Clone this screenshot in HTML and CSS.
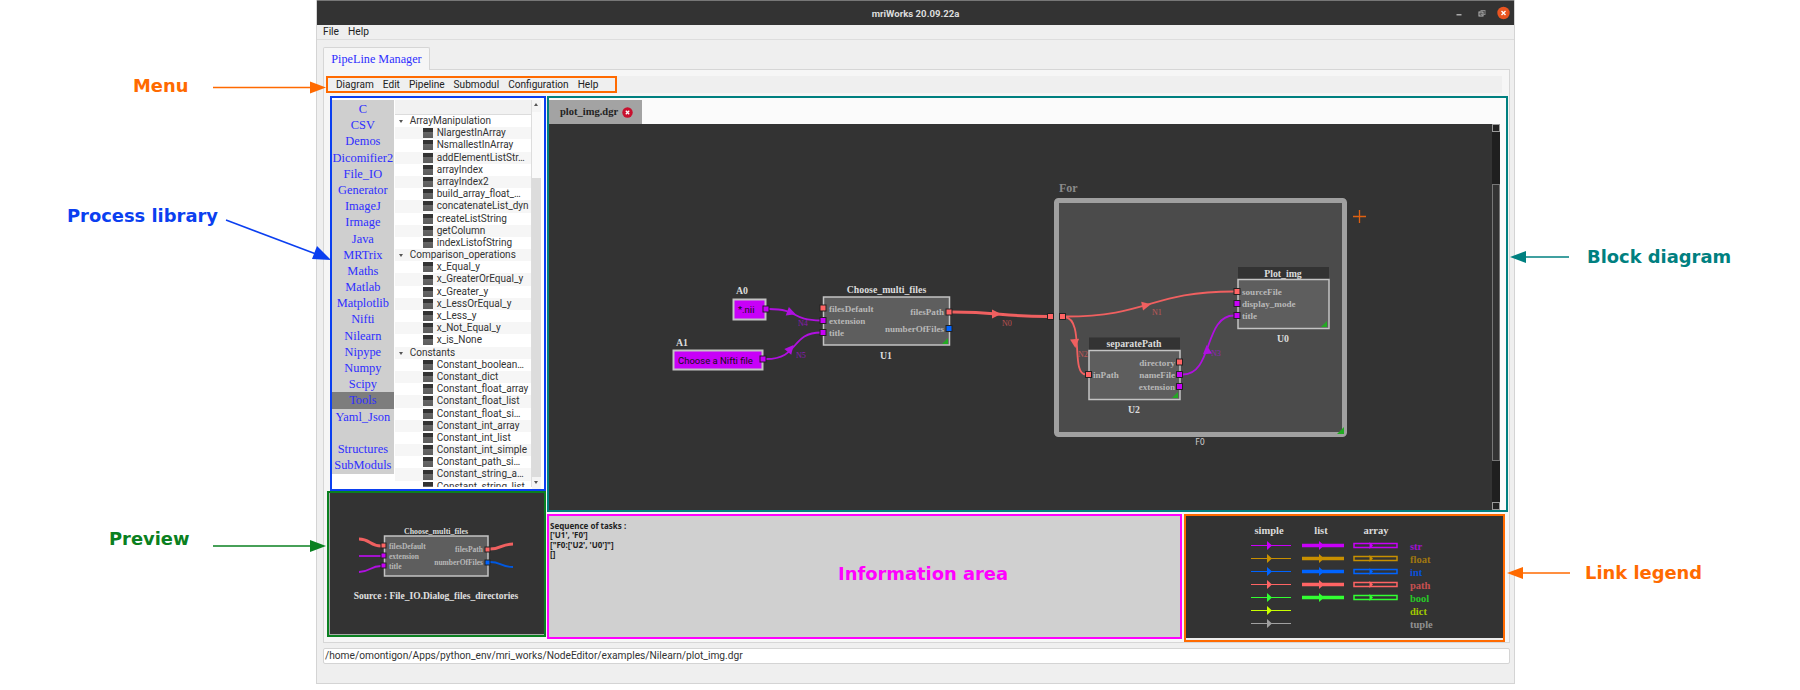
FILE: index.html
```html
<!DOCTYPE html>
<html lang="en">
  <head>
    <meta charset="UTF-8" />
    <title>mriWorks 20.09.22a</title>
    <link rel="stylesheet" href="styles.css">
  </head>

  <body>
    <div class="window">
      <header class="titlebar">
        <span class="title">mriWorks 20.09.22a</span>
        <svg class="winbtns" width="56" height="14" viewBox="0 0 56 14">
          <rect x="1.500" y="8" width="5" height="1.500" fill="#aaa" />
          <rect x="24" y="6" width="4" height="4" fill="none" stroke="#bbb" />
          <rect x="26" y="4.500" width="4" height="4" fill="none" stroke="#888" />
          <circle cx="48.500" cy="7" r="6.200" fill="#e95420" />
          <path d="M46.500 5 L50.500 9 M50.500 5 L46.500 9" stroke="#fff" stroke-width="1.400" />
        </svg>
      </header>

      <nav class="menubar">
        <span>File</span>
        <span>Help</span>
      </nav>

      <div class="tabs">
        <div class="tab">PipeLine Manager</div>
      </div>

      <section class="pane">
        <div class="toolstrip">
          <nav class="toolbar">
            <span>Diagram</span>
            <span>Edit</span>
            <span>Pipeline</span>
            <span>Submodul</span>
            <span>Configuration</span>
            <span>Help</span>
          </nav>
        </div>

        <div class="work">
          <div class="leftcol">
            <div class="library">
              <ul class="libs">
                <li>C</li>
                <li>CSV</li>
                <li>Demos</li>
                <li>Dicomifier2</li>
                <li>File_IO</li>
                <li>Generator</li>
                <li>ImageJ</li>
                <li>Irmage</li>
                <li>Java</li>
                <li>MRTrix</li>
                <li>Maths</li>
                <li>Matlab</li>
                <li>Matplotlib</li>
                <li>Nifti</li>
                <li>Nilearn</li>
                <li>Nipype</li>
                <li>Numpy</li>
                <li>Scipy</li>
                <li class="valgt">Tools</li>
                <li>Yaml_Json</li>
                <li></li>
                <li>Structures</li>
                <li>SubModuls</li>
              </ul>
              <div class="tree">
                <div class="treehead"></div>
                <div class="rows">
                  <div class="row cat">ArrayManipulation</div>
                  <div class="row alt"><i></i>NlargestInArray</div>
                  <div class="row"><i></i>NsmallestInArray</div>
                  <div class="row alt"><i></i>addElementListStr…</div>
                  <div class="row"><i></i>arrayIndex</div>
                  <div class="row alt"><i></i>arrayIndex2</div>
                  <div class="row"><i></i>build_array_float_…</div>
                  <div class="row alt"><i></i>concatenateList_dyn</div>
                  <div class="row"><i></i>createListString</div>
                  <div class="row alt"><i></i>getColumn</div>
                  <div class="row"><i></i>indexListofString</div>
                  <div class="row alt cat">Comparison_operations</div>
                  <div class="row"><i></i>x_Equal_y</div>
                  <div class="row alt"><i></i>x_GreaterOrEqual_y</div>
                  <div class="row"><i></i>x_Greater_y</div>
                  <div class="row alt"><i></i>x_LessOrEqual_y</div>
                  <div class="row"><i></i>x_Less_y</div>
                  <div class="row alt"><i></i>x_Not_Equal_y</div>
                  <div class="row"><i></i>x_is_None</div>
                  <div class="row alt cat">Constants</div>
                  <div class="row"><i></i>Constant_boolean…</div>
                  <div class="row alt"><i></i>Constant_dict</div>
                  <div class="row"><i></i>Constant_float_array</div>
                  <div class="row alt"><i></i>Constant_float_list</div>
                  <div class="row"><i></i>Constant_float_si…</div>
                  <div class="row alt"><i></i>Constant_int_array</div>
                  <div class="row"><i></i>Constant_int_list</div>
                  <div class="row alt"><i></i>Constant_int_simple</div>
                  <div class="row"><i></i>Constant_path_si…</div>
                  <div class="row alt"><i></i>Constant_string_a…</div>
                  <div class="row"><i></i>Constant_string_list</div>
                </div>
              </div>
              <div class="treescroll">
                <span class="up"></span>
                <span class="thumb"></span>
                <span class="down"></span>
              </div>
            </div>

            <div class="preview">
              <svg width="212" height="140" viewBox="330 494 212 140">
                <text x="436" y="534" class="head sm" text-anchor="middle">Choose_multi_files</text>
                <rect x="384.500" y="536" width="103.500" height="40" class="node" />
                <path d="M359 539 C370 539 370 546 381 546" class="lk thick path" />
                <path d="M359 556 L381 556" class="lk str" />
                <path d="M359 572 C370 572 370 566 381 566" class="lk str" />
                <path d="M490 549 C501 549 501 544 513 544" class="lk thick path" />
                <path d="M490 562 C501 562 501 567 513 567" class="lk int" />
                <rect x="381" y="543" width="5" height="5" class="port path" />
                <rect x="381" y="553" width="5" height="5" class="port str" />
                <rect x="381" y="563" width="5" height="5" class="port str" />
                <rect x="485" y="547" width="5" height="5" class="port path" />
                <rect x="485" y="560" width="5" height="5" class="port int" />
                <text x="389" y="548.500" class="plug sm">filesDefault</text>
                <text x="389" y="558.500" class="plug sm">extension</text>
                <text x="389" y="568.500" class="plug sm">title</text>
                <text x="483" y="552" class="plug sm" text-anchor="end">filesPath</text>
                <text x="483" y="565" class="plug sm" text-anchor="end">numberOfFiles</text>
                <text x="436" y="599" class="source" text-anchor="middle">Source : File_IO.Dialog_files_directories</text>
              </svg>
            </div>
          </div>

          <div class="rightcol">
            <div class="diagram">
              <div class="dtabs">
                <div class="dtab">
                  plot_img.dgr
                  <svg class="dclose" width="11" height="11" viewBox="0 0 11 11">
                    <circle cx="5.500" cy="5.500" r="5.200" fill="#c8102e" />
                    <path d="M3.800 3.800 L7.200 7.200 M7.200 3.800 L3.800 7.200" stroke="#fff" stroke-width="1.300" />
                  </svg>
                </div>
              </div>
              <div class="canvas">
                <!-- coordinates are the ones of the whole screen, easier to measure -->
                <svg width="951" height="387" viewBox="549 124 951 387">
                  <defs>
                    <polygon id="head" points="-5,-4.500 4,0 -5,4.500" />
                  </defs>

                  <!-- group F0 -->
                  <text x="1059" y="192" class="forlabel">For</text>
                  <rect x="1056.500" y="200.500" width="288" height="234" rx="2" class="group" />
                  <polygon points="1337,434 1344,434 1344,427" fill="#22aa22" />
                  <text x="1200" y="445" class="small" text-anchor="middle">F0</text>
                  <path d="M1353 216.500 H1366 M1359.500 210 V223" stroke="#e06010" stroke-width="1.300" fill="none" />

                  <!-- links -->
                  <path d="M769 309 C800 309 790 320.500 821 320.500" class="lk str" />
                  <use href="#head" transform="translate(792 313) rotate(20)" class="hd str" />
                  <text x="798" y="326" class="lklabel str">N4</text>
                  <path d="M766 359 C800 359 790 332.500 821 332.500" class="lk str" />
                  <use href="#head" transform="translate(791 348) rotate(-50)" class="hd str" />
                  <text x="796" y="358" class="lklabel str">N5</text>
                  <path d="M952 312 C1000 312 1000 316.500 1048 316.500" class="lk thick path" />
                  <use href="#head" transform="translate(997 314)" class="hd path" />
                  <text x="1002" y="326" class="lklabel path">N0</text>
                  <path d="M1065 316.500 C1150 316.500 1150 291.500 1234 291.500" class="lk path" />
                  <use href="#head" transform="translate(1147 305) rotate(-12)" class="hd path" />
                  <text x="1152" y="315" class="lklabel path">N1</text>
                  <path d="M1065 317 C1085 320 1070 374.500 1086 374.500" class="lk path" />
                  <use href="#head" transform="translate(1075 344) rotate(85)" class="hd path" />
                  <text x="1078" y="357" class="lklabel path">N2</text>
                  <path d="M1183 374.500 C1213 374.500 1204 315.500 1234 315.500" class="lk str" />
                  <use href="#head" transform="translate(1207 349) rotate(-95)" class="hd str" />
                  <text x="1211" y="356" class="lklabel str">N3</text>

                  <!-- inputs -->
                  <text x="736" y="294" class="head">A0</text>
                  <rect x="733.500" y="299.500" width="32" height="20" class="input" />
                  <text x="738" y="313" class="inputtxt">*.nii</text>
                  <rect x="763" y="306" width="6" height="6" class="port str" />
                  <text x="676" y="346" class="head">A1</text>
                  <rect x="673.500" y="350.500" width="89" height="19" class="input" />
                  <text x="678" y="363.500" class="inputtxt">Choose a Nifti file</text>
                  <rect x="760" y="356" width="6" height="6" class="port str" />

                  <!-- U1 -->
                  <text x="886.500" y="292.500" class="head" text-anchor="middle">Choose_multi_files</text>
                  <rect x="823.500" y="297" width="126" height="48" class="node" />
                  <polygon points="942,344 948,344 948,338" fill="#22aa22" />
                  <rect x="820" y="305" width="6" height="6" class="port path" />
                  <rect x="820" y="317.500" width="6" height="6" class="port str" />
                  <rect x="820" y="329.500" width="6" height="6" class="port str" />
                  <rect x="946" y="309" width="6" height="6" class="port path" />
                  <rect x="946" y="325.500" width="6" height="6" class="port int" />
                  <text x="829" y="311.500" class="plug">filesDefault</text>
                  <text x="829" y="324" class="plug">extension</text>
                  <text x="829" y="336" class="plug">title</text>
                  <text x="944" y="315" class="plug" text-anchor="end">filesPath</text>
                  <text x="944" y="331.500" class="plug" text-anchor="end">numberOfFiles</text>
                  <text x="886" y="358.500" class="head" text-anchor="middle">U1</text>

                  <rect x="1047.500" y="313.500" width="6" height="6" class="port path" />
                  <rect x="1059.500" y="313.500" width="6" height="6" class="port path" />

                  <!-- U0 -->
                  <rect x="1238" y="267" width="91" height="13" fill="#333" />
                  <text x="1283" y="276.500" class="head" text-anchor="middle">Plot_img</text>
                  <rect x="1238" y="279.500" width="91" height="49" class="node" />
                  <polygon points="1321,327 1327,327 1327,321" fill="#22aa22" />
                  <rect x="1234" y="288.500" width="6" height="6" class="port path" />
                  <rect x="1234" y="300.500" width="6" height="6" class="port str" />
                  <rect x="1234" y="312.500" width="6" height="6" class="port str" />
                  <text x="1242" y="295" class="plug">sourceFile</text>
                  <text x="1242" y="307" class="plug">display_mode</text>
                  <text x="1242" y="319" class="plug">title</text>
                  <text x="1283" y="341.500" class="head" text-anchor="middle">U0</text>

                  <!-- U2 -->
                  <rect x="1089" y="337.500" width="91" height="13" fill="#333" />
                  <text x="1134" y="347" class="head" text-anchor="middle">separatePath</text>
                  <rect x="1089" y="350.500" width="91" height="49" class="node" />
                  <polygon points="1172,398 1178,398 1178,392" fill="#22aa22" />
                  <rect x="1085.500" y="371.500" width="6" height="6" class="port path" />
                  <rect x="1176.500" y="359" width="6" height="6" class="port path" />
                  <rect x="1176.500" y="371.500" width="6" height="6" class="port str" />
                  <rect x="1176.500" y="383.500" width="6" height="6" class="port str" />
                  <text x="1093" y="378" class="plug">inPath</text>
                  <text x="1175" y="365.500" class="plug" text-anchor="end">directory</text>
                  <text x="1175" y="378" class="plug" text-anchor="end">nameFile</text>
                  <text x="1175" y="390" class="plug" text-anchor="end">extension</text>
                  <text x="1134" y="412.500" class="head" text-anchor="middle">U2</text>
                </svg>
                <div class="vscroll">
                  <span class="vbtn"></span>
                  <span class="vgap"></span>
                  <span class="vthumb"></span>
                  <span class="vtrough"></span>
                  <span class="vbtn"></span>
                </div>
              </div>
            </div>

            <div class="bottomrow">
              <div class="info">
                <p>Sequence of tasks :</p>
                <p>['U1', 'F0']</p>
                <p>["F0:['U2', 'U0']"]</p>
                <p>[]</p>
              </div>
              <div class="legend">
                <svg width="317" height="121" viewBox="1186 517 317 121">
                  <defs>
                    <polygon id="ah" points="-2,-4.500 3,0 -2,4.500" />
                    <polygon id="ahs" points="-1.500,-3.500 2,0 -1.500,3.500" />
                  </defs>
                  <text x="1269" y="533.500" class="head big" text-anchor="middle">simple</text>
                  <text x="1321" y="533.500" class="head big" text-anchor="middle">list</text>
                  <text x="1376" y="533.500" class="head big" text-anchor="middle">array</text>

                  <g class="lgd str">
                    <path d="M1251 545.500 H1291" />
                    <path d="M1302 545.500 H1344" stroke-width="3.500" />
                    <rect x="1354" y="543.500" width="43" height="4" />
                    <use href="#ah" x="1269" y="545.500" /><use href="#ah" x="1321" y="545.500" /><use href="#ahs" x="1371" y="545.500" />
                    <text x="1410" y="549.500">str</text>
                  </g>
                  <g class="lgd float">
                    <path d="M1251 558.500 H1291" />
                    <path d="M1302 558.500 H1344" stroke-width="3.500" />
                    <rect x="1354" y="556.500" width="43" height="4" />
                    <use href="#ah" x="1269" y="558.500" /><use href="#ah" x="1321" y="558.500" /><use href="#ahs" x="1371" y="558.500" />
                    <text x="1410" y="562.500">float</text>
                  </g>
                  <g class="lgd int">
                    <path d="M1251 571.500 H1291" />
                    <path d="M1302 571.500 H1344" stroke-width="3.500" />
                    <rect x="1354" y="569.500" width="43" height="4" />
                    <use href="#ah" x="1269" y="571.500" /><use href="#ah" x="1321" y="571.500" /><use href="#ahs" x="1371" y="571.500" />
                    <text x="1410" y="575.500">int</text>
                  </g>
                  <g class="lgd path">
                    <path d="M1251 584.500 H1291" />
                    <path d="M1302 584.500 H1344" stroke-width="3.500" />
                    <rect x="1354" y="582.500" width="43" height="4" />
                    <use href="#ah" x="1269" y="584.500" /><use href="#ah" x="1321" y="584.500" /><use href="#ahs" x="1371" y="584.500" />
                    <text x="1410" y="588.500">path</text>
                  </g>
                  <g class="lgd bool">
                    <path d="M1251 597.500 H1291" />
                    <path d="M1302 597.500 H1344" stroke-width="3.500" />
                    <rect x="1354" y="595.500" width="43" height="4" />
                    <use href="#ah" x="1269" y="597.500" /><use href="#ah" x="1321" y="597.500" /><use href="#ahs" x="1371" y="597.500" />
                    <text x="1410" y="601.500">bool</text>
                  </g>
                  <g class="lgd dict">
                    <path d="M1251 610.500 H1291" />
                    <use href="#ah" x="1269" y="610.500" />
                    <text x="1410" y="614.500">dict</text>
                  </g>
                  <g class="lgd tuple">
                    <path d="M1251 623.500 H1291" />
                    <use href="#ah" x="1269" y="623.500" />
                    <text x="1410" y="627.500">tuple</text>
                  </g>
                </svg>
              </div>
            </div>
          </div>
        </div>
      </section>

      <div class="pathbar">/home/omontigon/Apps/python_env/mri_works/NodeEditor/examples/Nilearn/plot_img.dgr</div>
    </div>

    <!-- annotations on top of the screenshot -->
    <svg class="arrows" width="1800" height="690" viewBox="0 0 1800 690">
      <path d="M213 87.500 H312" stroke="#ff6a00" stroke-width="1.500" />
      <polygon points="326,87.500 310,81.500 310,93.500" fill="#ff6a00" />
      <path d="M226 220 L316 254" stroke="#0b3ff0" stroke-width="1.500" />
      <polygon points="331,260 312,259 317,246" fill="#0b3ff0" />
      <path d="M213 546 H312" stroke="#0a8020" stroke-width="1.500" />
      <polygon points="326,546 310,540 310,552" fill="#0a8020" />
      <path d="M1569 257 H1525" stroke="#008080" stroke-width="1.500" />
      <polygon points="1510,257 1526,251 1526,263" fill="#008080" />
      <path d="M1570 573 H1522" stroke="#ff6a00" stroke-width="1.500" />
      <polygon points="1507,573 1523,567 1523,579" fill="#ff6a00" />
    </svg>
    <span class="note n-menu">Menu</span>
    <span class="note n-lib">Process library</span>
    <span class="note n-prev">Preview</span>
    <span class="note n-info">Information area</span>
    <span class="note n-block">Block diagram</span>
    <span class="note n-link">Link legend</span>
  </body>
</html>
```

FILE: styles.css
```css
html,
body {
  margin: 0;
  background-color: white;
  overflow: hidden;
}
body {
  width: 1800px;
  height: 690px;
  position: relative;
  font-family: Roboto, "Noto Sans", sans-serif;
}

/* the application window */
.window {
  margin-left: 316px;
  width: 1199px;
  height: 684px;
  box-sizing: border-box;
  background-color: #efefef;
  border: 1px solid #d4d4d4;
  border-top: 0;
  display: flex;
  flex-direction: column;
}
.titlebar {
  height: 25px;
  background-color: #333;
  border-top: 1px solid #777;
  box-sizing: border-box;
  display: flex;
  align-items: center;
  justify-content: center;
  position: relative;
}
.title {
  color: #ddd;
  font-size: 9.600px;
  font-weight: bold;
}
.winbtns {
  position: absolute;
  right: 3px;
  top: 5px;
}
.menubar {
  height: 14px;
  padding: 0 0 0 6px;
  border-bottom: 1px solid #ddd;
  display: flex;
  gap: 9px;
  font-size: 10.200px;
  line-height: 14px;
  color: #222;
}
.tabs {
  height: 29px;
  padding-left: 6px;
  display: flex;
  align-items: flex-end;
}
.tab {
  height: 23px;
  box-sizing: border-box;
  width: 107px;
  background-color: #f6f6f6;
  border: 1px solid #d6d6d6;
  border-bottom: 0;
  border-radius: 2px 2px 0 0;
  color: #2e2eff;
  font-family: "Liberation Serif", serif;
  font-size: 12.200px;
  line-height: 23px;
  text-align: center;
  position: relative;
  top: 1px;
}
.pane {
  margin-left: 6px;
  width: 1187px;
  height: 574px;
  box-sizing: border-box;
  background-color: #f6f6f6;
  border: 1px solid #d6d6d6;
  padding: 6px 0 0 2px;
}
.toolstrip {
  width: 1176px;
  background-color: #efefef;
}

/* orange box */
.toolbar {
  width: 291px;
  height: 17px;
  box-sizing: border-box;
  border: 2px solid #ff6a00;
  display: flex;
  padding-left: 8px;
  gap: 9px;
  font-size: 10.100px;
  line-height: 13px;
  color: #222;
}

.work {
  display: flex;
  margin-top: 3px;
  gap: 1px;
}
.leftcol {
  width: 220px;
  display: flex;
  flex-direction: column;
}

/* process library */
.library {
  margin-left: 4px;
  width: 216px;
  height: 395px;
  box-sizing: border-box;
  border: 2px solid #0b3ff0;
  padding: 2px 3px 0 0;
  display: flex;
  background-color: white;
}
.libs {
  list-style: none;
  margin: 0;
  padding: 1px 0 0;
  width: 62px;
  height: 373px;
  background-color: #cfcfcf;
  font-family: "Liberation Serif", serif;
  font-size: 12.400px;
  color: #2e2eff;
  text-align: center;
}
.libs li {
  height: 16.200px;
  line-height: 16.200px;
}
.libs .valgt {
  background-color: #7d7d7d;
}
.tree {
  margin-left: 1px;
  width: 138px;
  overflow: hidden;
  height: 387px;
  border-right: 1px solid #ddd;
  box-sizing: border-box;
  background-color: white;
}
.treehead {
  height: 15px;
  background-color: #f2f2f2;
  border-bottom: 1px solid #dcdcdc;
  box-sizing: border-box;
}
.row {
  height: 12.200px;
  line-height: 12.200px;
  font-size: 10px;
  color: #333;
  padding-left: 28px;
  white-space: nowrap;
  display: flex;
  align-items: center;
  gap: 4px;
}
.row i {
  width: 10px;
  height: 10px;
  flex: none;
  background: linear-gradient(#333 35%, #666 40%, #5c5c5c);
}
.row.alt {
  background-color: #f6f6f6;
}
.row.cat {
  padding-left: 15px;
  position: relative;
}
.row.cat::before {
  content: "";
  position: absolute;
  left: 4px;
  top: 5px;
  border: 2.500px solid transparent;
  border-top: 3px solid #555;
  border-bottom: 0;
}
.treescroll {
  width: 9px;
  height: 389px;
  background-color: #dcdcdc;
  display: flex;
  flex-direction: column;
  align-items: center;
}
.treescroll .up {
  height: 12px;
  width: 100%;
  background-color: #f4f4f4;
  position: relative;
}
.treescroll .up::before,
.treescroll .down::before {
  content: "";
  position: absolute;
  left: 2px;
  border: 2.500px solid transparent;
}
.treescroll .up::before {
  top: 3px;
  border-bottom: 3px solid #555;
  border-top: 0;
}
.treescroll .thumb {
  height: 66px;
  width: 100%;
  background-color: #fafafa;
}
.treescroll .down {
  height: 12px;
  width: 100%;
  margin-top: auto;
  background-color: #f4f4f4;
  position: relative;
}
.treescroll .down::before {
  top: 4px;
  border-top: 3px solid #555;
  border-bottom: 0;
}

/* preview */
.preview {
  margin-left: 1px;
  width: 219px;
  height: 146px;
  box-sizing: border-box;
  border: 2px solid #0a8020;
  background-color: #333;
  padding: 1px;
  box-shadow: inset 1px -1px 0 #aaa;
}
.preview svg {
  display: block;
}

.rightcol {
  width: 961px;
}

/* block diagram */
.diagram {
  width: 961px;
  height: 416px;
  box-sizing: border-box;
  border: 2px solid #008080;
  background-color: #fbfbfb;
  padding: 2px 6px 0 0;
  display: flex;
  flex-direction: column;
}
.dtabs {
  height: 24px;
  flex: none;
}
.dtab {
  width: 93px;
  height: 24px;
  box-sizing: border-box;
  background-color: #a3a3a3;
  padding-left: 11px;
  font-family: "Liberation Serif", serif;
  font-weight: bold;
  font-size: 10.500px;
  line-height: 24px;
  color: #222;
  position: relative;
}
.dclose {
  position: absolute;
  left: 73px;
  top: 7px;
}
.canvas {
  display: flex;
  flex: 1;
  background-color: #333;
  overflow: hidden;
}
.canvas > svg {
  display: block;
  flex: none;
}
.vscroll {
  margin-left: -8px;
  width: 8px;
  flex: none;
  display: flex;
  flex-direction: column;
  background-color: #1f1f1f;
}
.vbtn {
  height: 8px;
  box-sizing: border-box;
  border: 1.500px solid #999;
  background-color: #222;
}
.vgap {
  height: 52px;
}
.vthumb {
  height: 277px;
  box-sizing: border-box;
  border: 1px solid #777;
  background-color: #333;
}
.vtrough {
  flex: 1;
}

.bottomrow {
  display: flex;
  margin-top: 2px;
  gap: 2px;
}

/* information area */
.info {
  width: 635px;
  height: 125px;
  box-sizing: border-box;
  border: 2px solid #ff00ff;
  background-color: #d0d0d0;
  padding: 5px 1px;
  font-family: "Noto Sans", sans-serif;
  font-size: 8px;
  font-weight: bold;
  color: #222;
}
.info p {
  margin: 0;
  height: 9.400px;
  line-height: 9.400px;
}

/* link legend */
.legend {
  width: 321px;
  height: 128px;
  box-sizing: border-box;
  border: 2px solid #ff6a00;
  background-color: #333;
  padding: 1px 0 0 0;
  box-shadow: inset 0 -2px 0 #eee;
}
.legend svg {
  display: block;
}

/* svg texts and shapes of the diagrams */
svg text {
  font-family: "Liberation Serif", serif;
  font-weight: bold;
}
.head {
  font-size: 9.800px;
  fill: #dcdcdc;
}
.head.big {
  font-size: 10.500px;
}
.head.sm {
  font-size: 7.900px;
}
.plug {
  font-size: 9.100px;
  fill: #b8b8b8;
}
.plug.sm {
  font-size: 7.500px;
}
.source {
  font-size: 9.500px;
  fill: #e0e0e0;
}
.forlabel {
  font-size: 12px;
  fill: #8a8a8a;
}
.small {
  font-family: "DejaVu Sans", sans-serif;
  font-weight: normal;
  font-size: 8px;
  fill: #ccc;
}
.lklabel {
  font-size: 8px;
  font-weight: normal;
  stroke: none;
  opacity: 0.7;
}
.inputtxt {
  font-family: Roboto, sans-serif;
  font-weight: normal;
  font-size: 9.500px;
  fill: #111;
}
.node {
  fill: #5e5e5e;
  stroke: #c4c4c4;
  stroke-width: 1.500;
}
.input {
  fill: #c800f8;
  stroke: #c4c4c4;
  stroke-width: 2;
}
.group {
  fill: #4b4b4b;
  stroke: #a0a0a0;
  stroke-width: 5;
}
.lk {
  fill: none;
  stroke-width: 1.800;
}
.lk.thick {
  stroke-width: 3;
}
.lk.str {
  stroke: #b010e0;
}
.lk.path {
  stroke: #f06060;
}
.lk.int {
  stroke: #0058e0;
}
.hd.str,
.lklabel.str {
  fill: #b010e0;
}
.hd.path,
.lklabel.path {
  fill: #f06060;
}
.port {
  stroke: #222;
  stroke-width: 1;
}
.port.str {
  fill: #c800f8;
}
.port.path {
  fill: #ff6464;
}
.port.int {
  fill: #0064ff;
}

.lgd {
  --c: #fff;
  --t: #fff;
}
.lgd path {
  stroke: var(--c);
  fill: none;
}
.lgd rect {
  stroke: var(--c);
  stroke-width: 1.500;
  fill: none;
}
.lgd use {
  fill: var(--c);
}
.lgd text {
  fill: var(--t);
  font-size: 10.500px;
}
.lgd.str { --c: #c800f8; --t: #a010d0; }
.lgd.float { --c: #c89000; --t: #a07810; }
.lgd.int { --c: #0064ff; --t: #0a50d8; }
.lgd.path { --c: #ff6464; --t: #c85050; }
.lgd.bool { --c: #32ff32; --t: #28c828; }
.lgd.dict { --c: #c8ff00; --t: #a0c800; }
.lgd.tuple { --c: #a0a0a0; --t: #909090; }

/* path at the bottom */
.pathbar {
  margin: 5px 0 0 6px;
  width: 1187px;
  height: 16px;
  box-sizing: border-box;
  background-color: white;
  border: 1px solid #d4d4d4;
  border-radius: 2px;
  padding-left: 1px;
  font-size: 10.200px;
  line-height: 14px;
  color: #333;
  white-space: nowrap;
}

/* annotations */
.arrows {
  position: absolute;
  left: 0;
  top: 0;
  pointer-events: none;
}
.note {
  position: absolute;
  font-family: "DejaVu Sans", sans-serif;
  font-weight: bold;
  font-size: 17.900px;
  line-height: 20px;
  white-space: nowrap;
}
.n-menu {
  left: 133px;
  top: 76px;
  color: #ff6a00;
}
.n-lib {
  left: 67px;
  top: 206px;
  color: #0b3ff0;
}
.n-prev {
  left: 109px;
  top: 529px;
  color: #0a8020;
}
.n-info {
  left: 838px;
  top: 564px;
  color: #ff00ff;
}
.n-block {
  left: 1587px;
  top: 247px;
  color: #008080;
}
.n-link {
  left: 1585px;
  top: 563px;
  color: #ff6a00;
}
```
